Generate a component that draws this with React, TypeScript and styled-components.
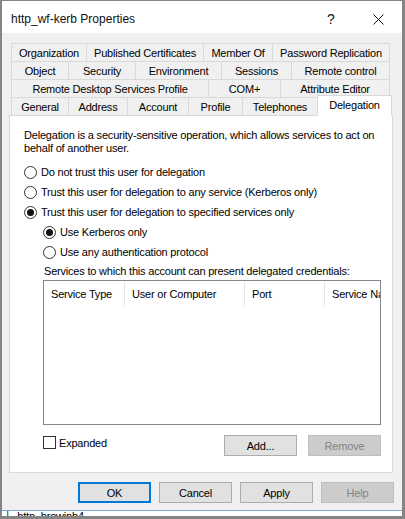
import React from "react";
import styled, { createGlobalStyle } from "styled-components";

const GlobalStyle = createGlobalStyle`
  html, body { margin: 0; padding: 0; background: #ffffff; }
  * { box-sizing: border-box; }
`;

const UI_FONT = `"Liberation Sans", Arial, sans-serif`;

const Frame = styled.div`
  width: 405px;
  height: 519px;
  border-style: solid;
  border-color: #858585;
  border-width: 1px 3px 3px 2px;
  display: flex;
  flex-direction: column;
  font-family: ${UI_FONT};
  color: #000;
  overflow: hidden;
`;

const TitleBar = styled.div`
  height: 32px;
  flex: none;
  background: #ffffff;
  display: flex;
  align-items: center;
  padding: 4px 0 0 9px;
`;

const Title = styled.div`
  flex: 1;
  font-size: 12px;
  color: #111;
`;

const HelpGlyph = styled.span`
  width: 46px;
  font-size: 14px;
  text-align: center;
  margin-right: 1px;
  color: #111;
`;

const CloseButton = styled.span`
  width: 46px;
  display: flex;
  justify-content: center;
  margin-right: 1px;
`;

const Body = styled.div`
  flex: 1;
  background: #f0f0f0;
  display: flex;
  flex-direction: column;
  padding-top: 10px;
`;

const TabStrip = styled.div`
  margin-left: 9px;
  display: flex;
  flex-direction: column;
`;

const TabRow = styled.div`
  height: 18px;
  display: flex;
  align-items: flex-start;
`;

const Tab = styled.div<{ $w: number; $active?: boolean; $first?: boolean }>`
  width: ${(p) => p.$w}px;
  height: ${(p) => (p.$active ? 21 : 18)}px;
  margin-top: ${(p) => (p.$active ? -2 : 0)}px;
  flex: none;
  display: flex;
  align-items: center;
  justify-content: center;
  padding-bottom: ${(p) => (p.$active ? 3 : 0)}px;
  font-size: 11px;
  letter-spacing: -0.2px;
  white-space: nowrap;
  background: ${(p) => (p.$active ? "#ffffff" : "#f0f0f0")};
  border-top: 1px solid #d9d9d9;
  border-right: 1px solid #d9d9d9;
  border-left: ${(p) => (p.$first || p.$active ? "1px solid #d9d9d9" : "none")};
  margin-left: ${(p) => (p.$active ? -1 : 0)}px;
  position: relative;
  z-index: ${(p) => (p.$active ? 2 : 1)};
`;

const Panel = styled.div`
  margin-left: 7px;
  width: 384px;
  height: 358px;
  flex: none;
  background: #ffffff;
  border: 1px solid #d9d9d9;
  padding: 13px 0 0 14px;
  display: flex;
  flex-direction: column;
  font-size: 11px;
  letter-spacing: -0.2px;
`;

const Description = styled.div`
  line-height: 13px;
  width: 360px;
`;

const OptionList = styled.div`
  margin-top: 7px;
  display: flex;
  flex-direction: column;
`;

const RadioRow = styled.div<{ $indent?: boolean }>`
  height: 20px;
  display: flex;
  align-items: center;
  padding-left: ${(p) => (p.$indent ? 19 : 0)}px;
`;

const RadioCircle = styled.span<{ $checked?: boolean }>`
  width: 13px;
  height: 13px;
  border-radius: 50%;
  border: 1px solid #333333;
  background: #ffffff;
  margin-right: 4px;
  flex: none;
  display: flex;
  align-items: center;
  justify-content: center;
  &::after {
    content: "";
    width: 7px;
    height: 7px;
    border-radius: 50%;
    background: #111111;
    display: ${(p) => (p.$checked ? "block" : "none")};
  }
`;

const ListLabel = styled.div`
  height: 18px;
  display: flex;
  align-items: center;
  padding-left: 20px;
`;

const ServicesList = styled.div`
  margin-left: 19px;
  width: 338px;
  height: 145px;
  flex: none;
  border: 1px solid #828790;
  background: #ffffff;
  overflow: hidden;
`;

const ListHeader = styled.div`
  height: 25px;
  display: flex;
  white-space: nowrap;
`;

const HeaderCell = styled.div<{ $w: number }>`
  width: ${(p) => p.$w}px;
  flex: none;
  padding-left: 7px;
  display: flex;
  align-items: center;
  position: relative;
  &::after {
    content: "";
    position: absolute;
    right: 0;
    top: 1px;
    bottom: 0;
    width: 1px;
    background: #e5e5e5;
  }
`;

const ListFooter = styled.div`
  margin-top: 10px;
  margin-left: 19px;
  width: 338px;
  display: flex;
  align-items: flex-start;
`;

const CheckRow = styled.div`
  flex: 1;
  display: flex;
  align-items: center;
  height: 13px;
  margin-top: 1px;
`;

const CheckBox = styled.span`
  width: 13px;
  height: 13px;
  border: 1px solid #333333;
  background: #ffffff;
  margin-right: 3px;
  flex: none;
`;

const Button = styled.div<{ $primary?: boolean; $disabled?: boolean }>`
  width: 73px;
  height: 21px;
  flex: none;
  display: flex;
  align-items: center;
  justify-content: center;
  font-size: 11px;
  letter-spacing: -0.2px;
  background: ${(p) => (p.$disabled ? "#cccccc" : "#e1e1e1")};
  color: ${(p) => (p.$disabled ? "#838383" : "#000000")};
  border: ${(p) =>
    p.$primary
      ? "2px solid #0078d7"
      : p.$disabled
      ? "1px solid #bfbfbf"
      : "1px solid #adadad"};
`;

const ButtonPair = styled.div`
  display: flex;
  gap: 11px;
`;

const DialogButtons = styled.div`
  margin-top: 9px;
  margin-right: 8px;
  display: flex;
  justify-content: flex-end;
  gap: 8px;
`;

const Underlay = styled.div`
  height: 6px;
  flex: none;
  border-top: 1px solid #7ea3d6;
  background: #ffffff;
  overflow: hidden;
  padding-left: 2px;
  font-size: 11px;
  line-height: 11px;
  letter-spacing: -0.2px;
  white-space: nowrap;
  color: #000;
`;

const tabRows: { label: string; w: number; active?: boolean }[][] = [
  [
    { label: "Organization", w: 76 },
    { label: "Published Certificates", w: 117 },
    { label: "Member Of", w: 69 },
    { label: "Password Replication", w: 117 },
  ],
  [
    { label: "Object", w: 58 },
    { label: "Security", w: 67 },
    { label: "Environment", w: 86 },
    { label: "Sessions", w: 70 },
    { label: "Remote control", w: 98 },
  ],
  [
    { label: "Remote Desktop Services Profile", w: 198 },
    { label: "COM+", w: 72 },
    { label: "Attribute Editor", w: 109 },
  ],
  [
    { label: "General", w: 58 },
    { label: "Address", w: 59 },
    { label: "Account", w: 61 },
    { label: "Profile", w: 54 },
    { label: "Telephones", w: 75 },
    { label: "Delegation", w: 75, active: true },
  ],
];

const columns = [
  { label: "Service Type", w: 81 },
  { label: "User or Computer", w: 120 },
  { label: "Port", w: 80 },
  { label: "Service Name", w: 90 },
];

export default function App() {
  return (
    <>
      <GlobalStyle />
      <Frame>
        <TitleBar>
          <Title>http_wf-kerb Properties</Title>
          <HelpGlyph>?</HelpGlyph>
          <CloseButton>
            <svg width="11" height="11" viewBox="0 0 11 11">
              <path d="M0.5 0.5 L10.5 10.5 M10.5 0.5 L0.5 10.5" stroke="#111" strokeWidth="1" fill="none" />
            </svg>
          </CloseButton>
        </TitleBar>
        <Body>
          <TabStrip>
            {tabRows.map((row, i) => (
              <TabRow key={i}>
                {row.map((t, j) => (
                  <Tab key={t.label} $w={t.w} $active={t.active} $first={j === 0}>
                    {t.label}
                  </Tab>
                ))}
              </TabRow>
            ))}
          </TabStrip>
          <Panel>
            <Description>
              Delegation is a security-sensitive operation, which allows services to act on behalf of
              another user.
            </Description>
            <OptionList>
              <RadioRow>
                <RadioCircle />
                Do not trust this user for delegation
              </RadioRow>
              <RadioRow>
                <RadioCircle />
                Trust this user for delegation to any service (Kerberos only)
              </RadioRow>
              <RadioRow>
                <RadioCircle $checked />
                Trust this user for delegation to specified services only
              </RadioRow>
              <RadioRow $indent>
                <RadioCircle $checked />
                Use Kerberos only
              </RadioRow>
              <RadioRow $indent>
                <RadioCircle />
                Use any authentication protocol
              </RadioRow>
              <ListLabel>Services to which this account can present delegated credentials:</ListLabel>
            </OptionList>
            <ServicesList>
              <ListHeader>
                {columns.map((c) => (
                  <HeaderCell key={c.label} $w={c.w}>
                    {c.label}
                  </HeaderCell>
                ))}
              </ListHeader>
            </ServicesList>
            <ListFooter>
              <CheckRow>
                <CheckBox />
                Expanded
              </CheckRow>
              <ButtonPair>
                <Button>Add...</Button>
                <Button $disabled>Remove</Button>
              </ButtonPair>
            </ListFooter>
          </Panel>
          <DialogButtons>
            <Button $primary>OK</Button>
            <Button>Cancel</Button>
            <Button>Apply</Button>
            <Button $disabled>Help</Button>
          </DialogButtons>
        </Body>
        <Underlay>└&nbsp;&nbsp;http_browinb4</Underlay>
      </Frame>
    </>
  );
}
